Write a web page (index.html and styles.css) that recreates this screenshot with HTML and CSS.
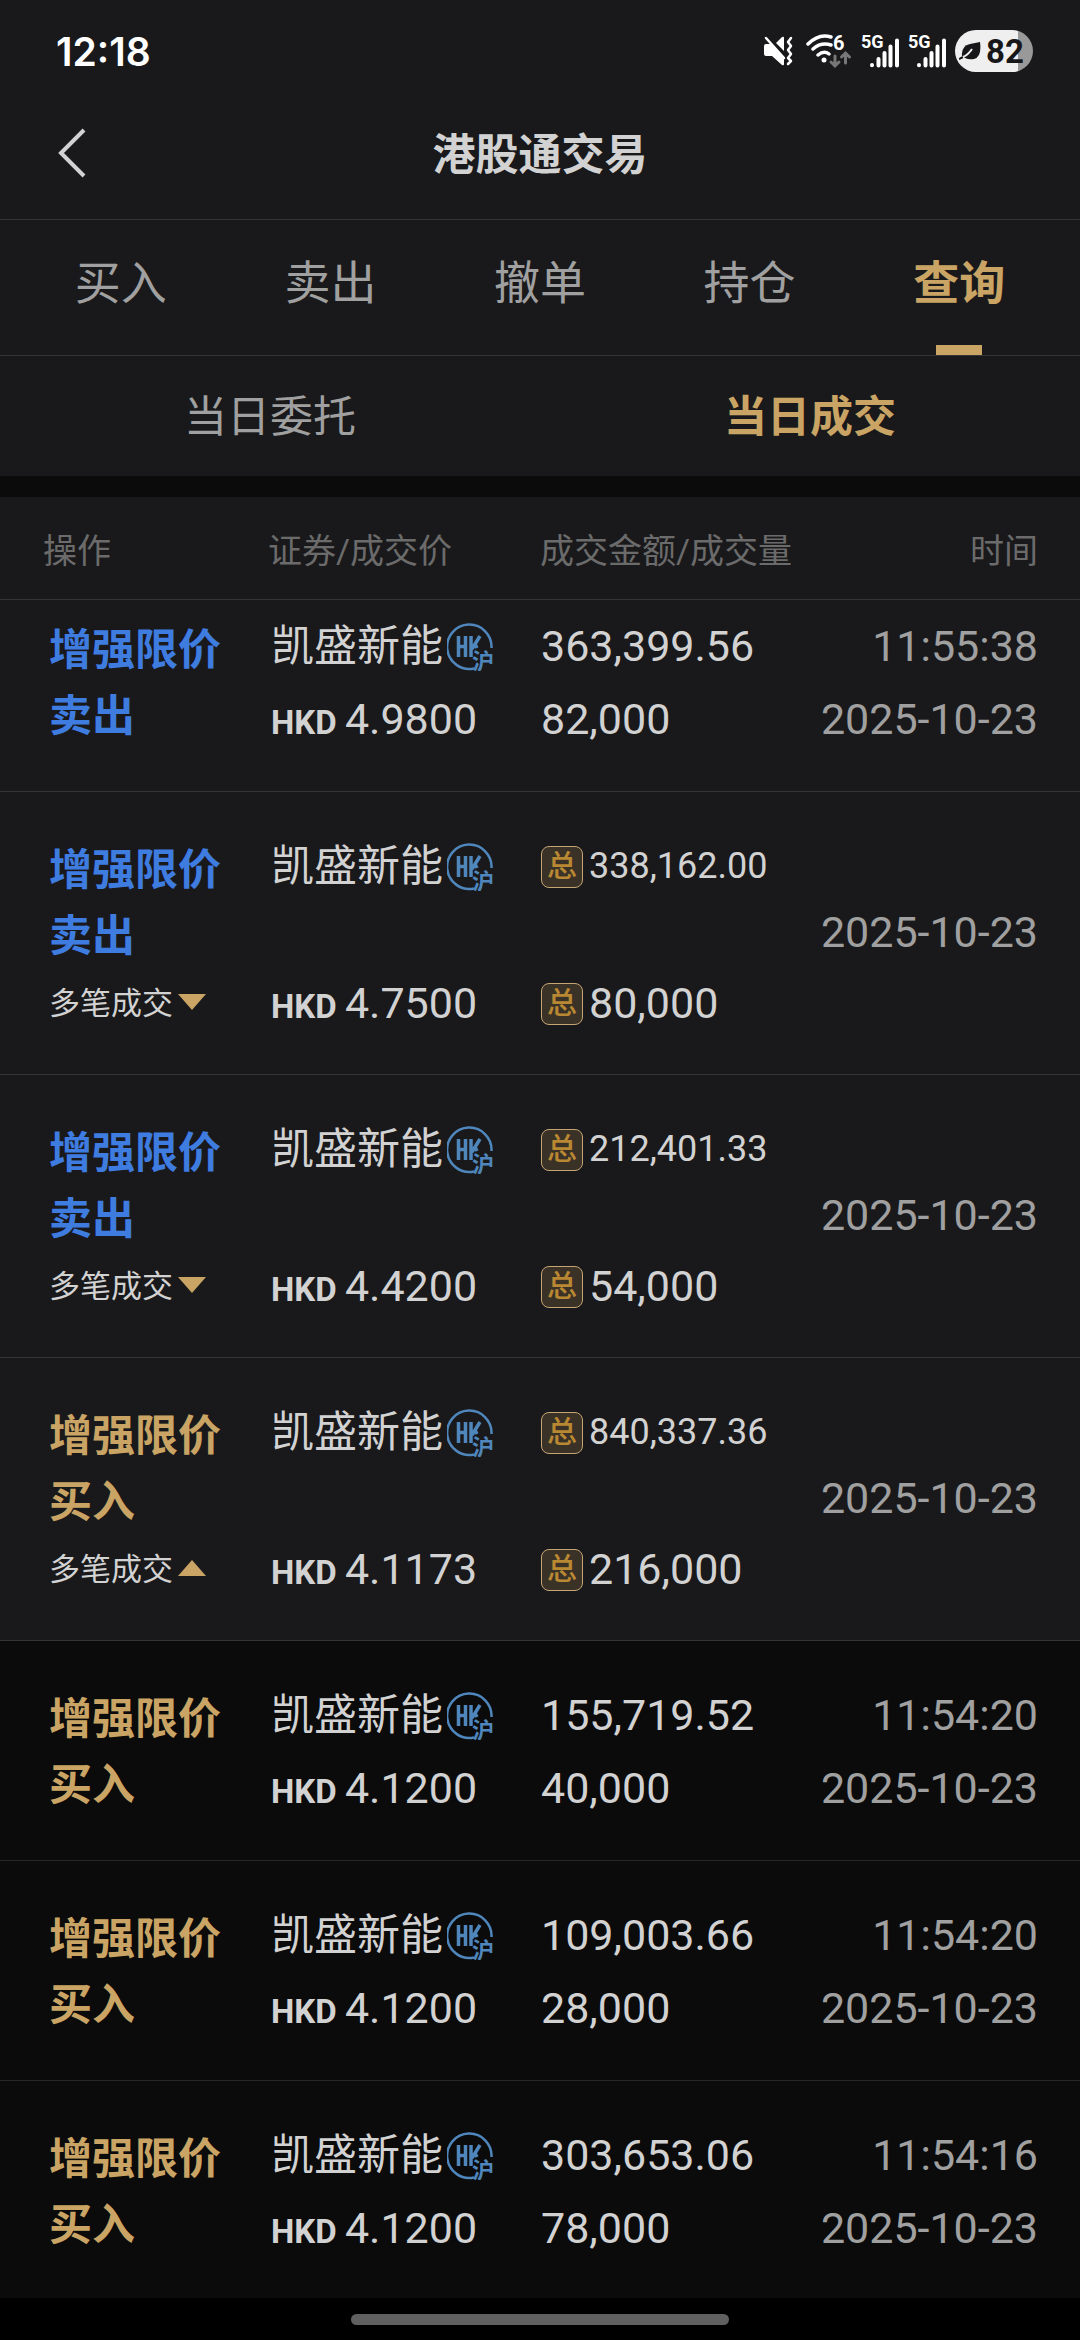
FILE: index.html
```html
<!DOCTYPE html>
<html lang="zh-CN">
<head>
<meta charset="utf-8">
<meta name="viewport" content="width=device-width, initial-scale=1">
<title>港股通交易</title>
<link rel="stylesheet" href="styles.css">
</head>
<body>
<svg class="defs" aria-hidden="true">
  <symbol id="hk" viewBox="0 0 46 48" overflow="visible">
    <g fill="none" stroke="#4f86bb">
      <path stroke-width="2.500" d="M44.500 25A22.200 22.200 0 1 0 27 45.500"/>
      <path stroke-width="3.500" d="M11.500 13v21M18.500 13v21M11.500 23.500h7M24 13v21M33 13L25 26M28 21l2 4"/>
    </g>
    <text class="hk-city" x="25" y="46">沪</text>
  </symbol>
  <symbol id="cell" viewBox="0 0 38 38" overflow="visible">
    <text class="cell-gen" x="0" y="16">5G</text>
    <path fill="none" stroke="#fff" stroke-width="4" stroke-linecap="round" d="M11 33v.2M17.500 27v6.500M23.500 21v12.500M29.500 14.500v19M36 8.500v25"/>
  </symbol>
</svg>
<div class="app">
  <header class="status">
    <time class="clock">12:18</time>
    <div class="status-icons">
      <svg class="mute" viewBox="0 0 30 34" aria-label="静音"><path fill="#fff" d="M3 10h5l13 14v6q0 2-2 1L9 22H3q-2 0-2-2v-8q0-2 2-2zM13 9l6-6q2-1 2 1v13z"/><path fill="none" stroke="#fff" stroke-width="2.500" stroke-linecap="round" stroke-linejoin="round" d="M3 4l18 20M28 4l-3 4 3 4-3 4 3 4-3 4 3 3-3 3"/></svg>
      <svg class="wifi" viewBox="0 0 46 38" aria-label="Wi-Fi"><g fill="none" stroke="#fff" stroke-width="3.500" stroke-linecap="round"><path d="M2 12Q13 1 25 5M7 17Q15 10 25 13M12 23Q18 18 23 22"/></g><circle cx="18" cy="28" r="2.500" fill="#fff"/><path fill="none" stroke="#777" stroke-width="3" stroke-linecap="round" d="M29 24v9M25 30l4 4 4-4M39.500 31v-9M35.500 25l4-4 4 4"/><text x="27" y="18" class="wifi-gen">6</text></svg>
      <svg class="cell"><use href="#cell"/></svg>
      <svg class="cell"><use href="#cell"/></svg>
      <span class="battery"><svg class="leaf" viewBox="0 0 22 20"><path fill="#171719" d="M3 15Q2 5 11 3q5-1 10-2 2 15-6 17-5 1-9-1z"/><path fill="none" stroke="#171719" stroke-width="2" d="M0 18l4-2"/><path fill="none" stroke="#efefef" stroke-width="2" d="M4 16Q9 14 13 8"/></svg>82</span>
    </div>
  </header>
  <div class="title-bar">
    <button class="back" type="button" aria-label="返回"><svg viewBox="0 0 28 50"><path fill="none" stroke="#d2d2d2" stroke-width="4" d="M26 2L3 25l23 23"/></svg></button>
    <h1>港股通交易</h1>
  </div>
  <nav class="tabs">
    <a href="#buy">买入</a>
    <a href="#sell">卖出</a>
    <a href="#cancel">撤单</a>
    <a href="#hold">持仓</a>
    <a href="#query" class="active" aria-current="page">查询</a>
  </nav>
  <nav class="subtabs">
    <a href="#orders">当日委托</a>
    <a href="#deals" class="active" aria-current="page">当日成交</a>
  </nav>
  <main class="list">
    <table>
      <thead>
        <tr><th class="c-op">操作</th><th class="c-name">证券/成交价</th><th class="c-sum">成交金额/成交量</th><th class="c-time">时间</th></tr>
      </thead>
      <tbody>
        <tr class="scrolled">
          <td><div class="op sell">增强限价<br>卖出</div></td>
          <td><div class="pair"><div class="name">凯盛新能<svg class="hk"><use href="#hk"/></svg></div><div><b>HKD </b>4.9800</div></div></td>
          <td><div class="pair"><div>363,399.56</div><div>82,000</div></div></td>
          <td><div class="pair when"><div>11:55:38</div><div>2025-10-23</div></div></td>
        </tr>
        <tr class="multi">
          <td><div class="op sell">增强限价<br>卖出</div><button class="toggle" type="button">多笔成交<svg viewBox="0 0 28 20"><path d="M0 4h28L14 20z"/></svg></button></td>
          <td><div class="pair"><div class="name">凯盛新能<svg class="hk"><use href="#hk"/></svg></div><div><b>HKD </b>4.7500</div></div></td>
          <td><div class="pair"><div class="total small"><i>总</i>338,162.00</div><div class="total"><i>总</i>80,000</div></div></td>
          <td class="when">2025-10-23</td>
        </tr>
        <tr class="multi">
          <td><div class="op sell">增强限价<br>卖出</div><button class="toggle" type="button">多笔成交<svg viewBox="0 0 28 20"><path d="M0 4h28L14 20z"/></svg></button></td>
          <td><div class="pair"><div class="name">凯盛新能<svg class="hk"><use href="#hk"/></svg></div><div><b>HKD </b>4.4200</div></div></td>
          <td><div class="pair"><div class="total small"><i>总</i>212,401.33</div><div class="total"><i>总</i>54,000</div></div></td>
          <td class="when">2025-10-23</td>
        </tr>
        <tr class="multi">
          <td><div class="op buy">增强限价<br>买入</div><button class="toggle" type="button" aria-expanded="true">多笔成交<svg viewBox="0 0 28 20"><path d="M0 20h28L14 4z"/></svg></button></td>
          <td><div class="pair"><div class="name">凯盛新能<svg class="hk"><use href="#hk"/></svg></div><div><b>HKD </b>4.1173</div></div></td>
          <td><div class="pair"><div class="total small"><i>总</i>840,337.36</div><div class="total"><i>总</i>216,000</div></div></td>
          <td class="when">2025-10-23</td>
        </tr>
        <tr class="detail">
          <td><div class="op buy">增强限价<br>买入</div></td>
          <td><div class="pair"><div class="name">凯盛新能<svg class="hk"><use href="#hk"/></svg></div><div><b>HKD </b>4.1200</div></div></td>
          <td><div class="pair"><div>155,719.52</div><div>40,000</div></div></td>
          <td><div class="pair when"><div>11:54:20</div><div>2025-10-23</div></div></td>
        </tr>
        <tr class="detail">
          <td><div class="op buy">增强限价<br>买入</div></td>
          <td><div class="pair"><div class="name">凯盛新能<svg class="hk"><use href="#hk"/></svg></div><div><b>HKD </b>4.1200</div></div></td>
          <td><div class="pair"><div>109,003.66</div><div>28,000</div></div></td>
          <td><div class="pair when"><div>11:54:20</div><div>2025-10-23</div></div></td>
        </tr>
        <tr class="detail">
          <td><div class="op buy">增强限价<br>买入</div></td>
          <td><div class="pair"><div class="name">凯盛新能<svg class="hk"><use href="#hk"/></svg></div><div><b>HKD </b>4.1200</div></div></td>
          <td><div class="pair"><div>303,653.06</div><div>78,000</div></div></td>
          <td><div class="pair when"><div>11:54:16</div><div>2025-10-23</div></div></td>
        </tr>
      </tbody>
    </table>
  </main>
  <footer class="gesture"><span></span></footer>
</div>
</body>
</html>
```
FILE: styles.css
```css
:root {
  --bg: #19191b;
  --dark: #0b0b0b;
  --line: #343436;
  --text: #d2d2d2;
  --muted: #a0a0a0;
  --gold: #c9a464;
  --blue: #3f7ce0;
}

* { box-sizing: border-box; }

body {
  margin: 0;
  background: var(--bg);
  color: var(--text);
  font-family: Roboto, "Noto Sans CJK SC", sans-serif;
  font-size: 43px;
}

a { color: inherit; text-decoration: none; }
button { padding: 0; border: 0; background: none; color: inherit; font: inherit; }
svg { display: block; }
.defs { display: none; }

.app { display: flex; flex-direction: column; height: 100vh; overflow: hidden; }

.status {
  display: flex;
  align-items: center;
  justify-content: space-between;
  height: 87px;
  padding: 15px 47px 0 56px;
  color: #fff;
}
.clock { font-family: Inter, sans-serif; font-size: 39px; font-weight: 600; }
.status-icons { display: flex; align-items: center; gap: 9px; }
.mute { width: 30px; height: 34px; margin-right: 4px; }
.wifi { width: 46px; height: 38px; }
.wifi-gen { fill: #fff; font-size: 20px; font-weight: 700; }
.cell { width: 38px; height: 38px; }
.cell-gen { fill: #fff; font-size: 18px; font-weight: 700; }
.battery {
  display: flex;
  align-items: center;
  gap: 5px;
  width: 78px;
  height: 42px;
  padding-left: 4px;
  border-radius: 21px;
  background: linear-gradient(90deg, #efefef 63px, #999 63px);
  color: #171719;
  font-size: 33px;
  font-weight: 700;
}
.leaf { width: 22px; height: 20px; }

.title-bar {
  display: grid;
  grid-template-columns: 86px 1fr 86px;
  align-items: center;
  height: 133px;
  border-bottom: 1px solid var(--line);
}
.back { justify-self: end; }
.back svg { width: 28px; height: 50px; }
h1 { margin: 0; padding-top: 4px; text-align: center; font-size: 43px; line-height: 64px; font-weight: 700; }

.tabs {
  display: grid;
  grid-template-columns: repeat(5, 1fr);
  height: 136px;
  padding: 0 16px;
  border-bottom: 1px solid var(--line);
  color: var(--muted);
  font-size: 46px;
  text-align: center;
}
.tabs a { display: flex; flex-direction: column; align-items: center; padding-top: 2px; line-height: 123px; }
.active { color: var(--gold); font-weight: 700; }
.tabs .active::after { content: ""; width: 46px; height: 10px; background: var(--gold); }

.subtabs {
  display: grid;
  grid-template-columns: 1fr 1fr;
  padding-top: 2px;
  border-bottom: 21px solid var(--dark);
  color: var(--muted);
  line-height: 118px;
  text-align: center;
}

.list { flex: 1; min-height: 0; overflow: hidden; }
table { width: 100%; border-collapse: separate; border-spacing: 0; table-layout: fixed; }
th {
  height: 103px;
  padding: 0;
  border-bottom: 1px solid var(--line);
  color: #6b6b6b;
  font-size: 34px;
  font-weight: 400;
  text-align: left;
  white-space: nowrap;
}
th:first-child { padding-left: 43px; }
th:nth-child(3) { padding-left: 2px; }
th:last-child { padding-right: 42px; text-align: right; }
.c-op { width: 268px; }
.c-name { width: 25%; }
.c-sum { width: 25%; }

td { padding: 38px 0 33px 3px; border-bottom: 1px solid var(--line); vertical-align: top; white-space: nowrap; }
td:first-child { padding-left: 49px; }
td:last-child { padding-right: 42px; }
.scrolled td { padding-top: 10px; }
.multi td { padding-bottom: 34px; }
.detail td { background: var(--dark); border-color: #272727; }

.op { padding-top: 7px; line-height: 66px; font-weight: 700; }
.sell { color: var(--blue); }
.buy { color: var(--gold); }
.toggle { display: flex; align-items: center; gap: 5px; height: 62px; font-size: 31px; }
.toggle svg { width: 28px; height: 20px; fill: var(--gold); }

.pair { display: flex; flex-direction: column; line-height: 73px; }
.pair > div { height: 73px; }
.pair { padding-bottom: 2px; }
.multi .pair { gap: 64px; padding-bottom: 0; }
.name { display: flex; align-items: center; gap: 4px; }
.hk { width: 46px; height: 48px; }
.hk-city { fill: #4f86bb; font-size: 22px; font-weight: 700; }
b { font-size: 33px; }
.when { color: var(--muted); text-align: right; }
.multi .when { padding: 33px 42px 36px 0; vertical-align: middle; }

.total { display: flex; align-items: center; gap: 6px; }
.total i {
  width: 42px;
  height: 42px;
  border: 1px solid #c4a573;
  border-radius: 8px;
  background: #3b3227;
  color: #b98832;
  font-size: 30px;
  font-style: normal;
  font-weight: 500;
  line-height: 38px;
  text-align: center;
}
.small { font-size: 36px; }

.gesture { display: flex; justify-content: center; padding: 16px 0 15px; background: #000; }
.gesture span { width: 35%; height: 11px; border-radius: 6px; background: #606060; }
```
